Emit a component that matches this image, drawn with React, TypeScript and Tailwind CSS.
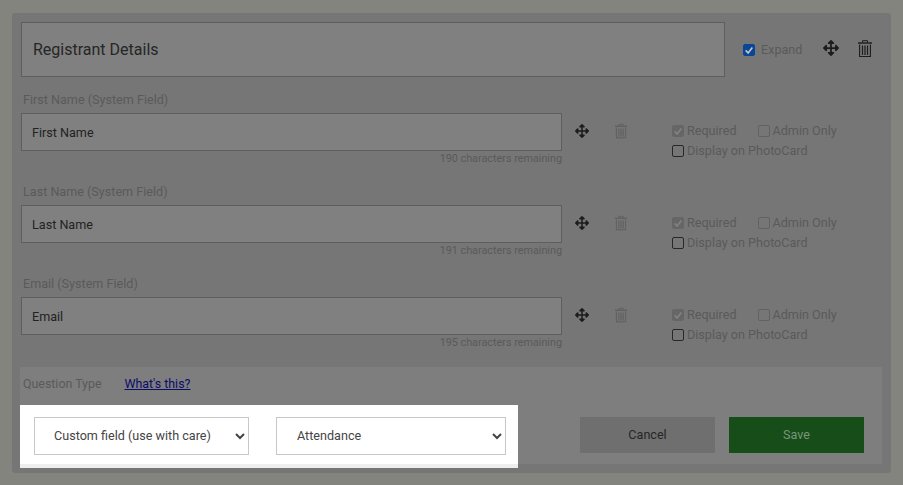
import { FaArrowsAlt } from "react-icons/fa";

const FIELDS = [
  { label: "First Name (System Field)", value: "First Name", left: 190, gap: "mb-[20px]" },
  { label: "Last Name (System Field)", value: "Last Name", left: 191, gap: "mb-[20px]" },
  { label: "Email (System Field)", value: "Email", left: 195, gap: "mb-[19px]" },
];

function Trash({ className }: { className: string }) {
  return (
    <svg viewBox="0 0 14 17" className={className} fill="none" stroke="currentColor">
      <path d="M4.5 2.5V.7h5v1.8" strokeWidth="1" />
      <path d="M0 3h14" strokeWidth="1.4" />
      <path d="M1.6 4.5v12h10.8v-12" strokeWidth="1.1" />
      <path d="M4.5 5.5v9.5M7 5.5v9.5M9.5 5.5v9.5" strokeWidth="1.2" />
    </svg>
  );
}

function Check({ checked, tone, label }: { checked?: boolean; tone: "blue" | "faded" | "plain"; label?: string }) {
  const box =
    tone === "blue"
      ? "bg-[#0a4596] border-[#0a4596]"
      : tone === "faded" && checked
        ? "bg-[#666666] border-[#666666]"
        : tone === "faded"
          ? "border-[#626262]"
          : "border-[#282828]";
  return (
    <span className="flex items-center gap-[3px]">
      <span className={`flex h-[12px] w-[12px] items-center justify-center rounded-[2px] border ${box}`}>
        {checked && (
          <svg viewBox="0 0 12 12" className="h-[10px] w-[10px]" fill="none" stroke={tone === "blue" ? "#c4c4c4" : "#828282"} strokeWidth="2">
            <path d="M2 6.5 5 9.5 10 3" />
          </svg>
        )}
      </span>
      {label && <span>{label}</span>}
    </span>
  );
}

function FieldRow({ label, value, left, gap }: (typeof FIELDS)[number]) {
  return (
    <div className={gap}>
      <div className="mb-[5px] ml-[2px] h-[16px] text-[12.6px] leading-[16px] text-[#5a5a5a]">{label}</div>
      <div className="flex items-start">
        <div className="w-[541px] shrink-0">
          <div className="flex h-[38px] items-center border border-[#5e5e5e] bg-[#808080] pl-[10px] pt-[2px] text-[12.6px] text-[#222222]">{value}</div>
          <div className="h-[13px] pt-[1px] text-right text-[10.8px] leading-[14px] text-[#5a5a5a]">{left} characters remaining</div>
        </div>
        <div className="flex h-[38px] w-[110px] shrink-0 items-center pl-[13px] text-[#1c1c1c]">
          <FaArrowsAlt className="h-[14px] w-[14px] -translate-y-[1px]" />
          <Trash className="ml-[26px] h-[16px] w-[12px] -translate-y-[1px] text-[#5e5e5e]" />
        </div>
        <div className="mt-[8px] text-[12.6px] leading-[20px] text-[#5a5a5a]">
          <div className="flex gap-[21px]">
            <Check checked tone="faded" label="Required" />
            <Check tone="faded" label="Admin Only" />
          </div>
          <Check tone="plain" label="Display on PhotoCard" />
        </div>
      </div>
    </div>
  );
}

export default function App() {
  return (
    <div className="h-[485px] w-[903px] overflow-hidden bg-[#84847f] px-[12px] pt-[13px] font-['Roboto',sans-serif]">
      <div className="h-[460px] w-[879px] rounded-[3px] bg-[#767676] pl-[9px] pr-[9px] pt-[9px]">
        <div className="mb-[15px] flex items-start">
          <div className="flex h-[55px] w-[704px] shrink-0 items-center border border-[#5e5e5e] bg-[#808080] pl-[11px] text-[16px] text-[#262626]">
            Registrant Details
          </div>
          <div className="flex h-[55px] items-center pl-[18px] pt-[1px] text-[12.6px] text-[#5a5a5a]">
            <span className="flex items-center gap-[6px]">
              <Check checked tone="blue" />
              Expand
            </span>
            <FaArrowsAlt className="ml-[21px] h-[16px] w-[16px] -translate-y-[2px] text-[#1c1c1c]" />
            <Trash className="ml-[19px] h-[17px] w-[14px] -translate-y-[2px] text-[#1c1c1c]" />
          </div>
        </div>

        {FIELDS.map((f) => (
          <FieldRow key={f.value} {...f} />
        ))}

        <div className="-ml-[1px] h-[97px] w-[862px] bg-[#7e7e7e]">
          <div className="flex h-[38px] items-center pb-[3px] pl-[3px] text-[12.4px] text-[#5a5a5a]">
            Question Type
            <a href="#" className="ml-[23px] text-[#0c0c6a] underline">
              What's this?
            </a>
          </div>
          <div className="flex items-start justify-between">
            <div className="relative h-[63px] w-[498px] bg-white">
              <div className="flex gap-[27px] pl-[14px] pt-[12px]">
                <select className="h-[38px] w-[215px] border border-[#c8c8c8] bg-white pb-[2px] pl-[15px] text-[12.6px] text-[#444444] outline-none">
                  <option>Custom field (use with care)</option>
                </select>
                <select className="h-[38px] w-[230px] border border-[#c8c8c8] bg-white pb-[2px] pl-[16px] text-[12.6px] text-[#444444] outline-none">
                  <option>Attendance</option>
                </select>
              </div>
              <div className="absolute bottom-0 left-0 h-[4px] w-full bg-[#eeeeee]" />
            </div>
            <div className="mr-[18px] mt-[12px] flex gap-[14px] text-[12.6px]">
              <button className="h-[36px] w-[135px] bg-[#6f6f6f] text-[#262626]">Cancel</button>
              <button className="h-[36px] w-[135px] bg-[#174d19] text-[#779578]">Save</button>
            </div>
          </div>
        </div>
      </div>
    </div>
  );
}
